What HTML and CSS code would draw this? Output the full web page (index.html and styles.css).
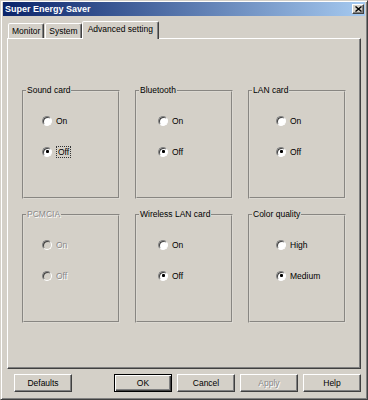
FILE: index.html
```html
<!DOCTYPE html>
<html lang="en">
<head>
    <meta charset="UTF-8">
    <title>Super Energy Saver</title>
    <link rel="stylesheet" href="styles.css">
</head>
<body>
    <div class="window">
        <div class="titlebar">
            <span class="title">Super Energy Saver</span>
            <button class="close" aria-label="Close">
                <svg width="7" height="6" viewBox="0 0 7 6"><path d="M0.5 0.5L6.5 5.5M6.5 0.5L0.5 5.5" stroke="#000" stroke-width="1.4" fill="none"/></svg>
            </button>
        </div>

        <div class="body">
            <div class="tabs">
                <div class="tab">Monitor</div>
                <div class="tab">System</div>
                <div class="tab active">Advanced setting</div>
            </div>

            <div class="panel">
                <div class="groups">
                    <fieldset class="group">
                        <legend>Sound card</legend>
                        <div class="opts">
                            <div class="opt"><span class="rb"></span>On</div>
                            <div class="opt checked"><span class="rb"></span><span class="focus">Off</span></div>
                        </div>
                    </fieldset>
                    <fieldset class="group">
                        <legend>Bluetooth</legend>
                        <div class="opts">
                            <div class="opt"><span class="rb"></span>On</div>
                            <div class="opt checked"><span class="rb"></span>Off</div>
                        </div>
                    </fieldset>
                    <fieldset class="group">
                        <legend>LAN card</legend>
                        <div class="opts">
                            <div class="opt"><span class="rb"></span>On</div>
                            <div class="opt checked"><span class="rb"></span>Off</div>
                        </div>
                    </fieldset>
                    <fieldset class="group disabled">
                        <legend>PCMCIA</legend>
                        <div class="opts">
                            <div class="opt"><span class="rb"></span>On</div>
                            <div class="opt"><span class="rb"></span>Off</div>
                        </div>
                    </fieldset>
                    <fieldset class="group">
                        <legend>Wireless LAN card</legend>
                        <div class="opts">
                            <div class="opt"><span class="rb"></span>On</div>
                            <div class="opt checked"><span class="rb"></span>Off</div>
                        </div>
                    </fieldset>
                    <fieldset class="group">
                        <legend>Color quality</legend>
                        <div class="opts">
                            <div class="opt"><span class="rb"></span>High</div>
                            <div class="opt checked"><span class="rb"></span>Medium</div>
                        </div>
                    </fieldset>
                </div>
            </div>

            <div class="buttons">
                <button class="btn defaults">Defaults</button>
                <button class="btn default">OK</button>
                <button class="btn">Cancel</button>
                <button class="btn" disabled>Apply</button>
                <button class="btn">Help</button>
            </div>
        </div>
    </div>
</body>
</html>
```

FILE: styles.css
```css
* { margin: 0; padding: 0; box-sizing: border-box; }

body {
    width: 368px;
    height: 400px;
    font-family: "Liberation Sans", Arial, sans-serif;
    font-size: 8.5px;
    color: #000;
    background: #d4d0c8;
}

.window {
    width: 368px;
    height: 400px;
    background: #d4d0c8;
    border: 1px solid;
    border-color: #d4d0c8 #404040 #404040 #d4d0c8;
    box-shadow: inset 1px 1px #fff, inset -1px -1px #808080;
    padding: 1px 2px 2px;
}

/* title bar */
.titlebar {
    height: 14px;
    display: flex;
    align-items: center;
    justify-content: space-between;
    padding: 0 1px 0 2px;
    background: linear-gradient(to right, #0a246a, #a6caf0);
}

.title {
    color: #fff;
    font-weight: bold;
    font-size: 9px;
}

.close {
    width: 12px;
    height: 10px;
    display: flex;
    align-items: center;
    justify-content: center;
    background: #d4d0c8;
    border: 1px solid;
    border-color: #fff #404040 #404040 #fff;
    box-shadow: inset -1px -1px #808080;
}

.body {
    padding: 5px 4px 0;
}

/* tabs */
.tabs {
    display: flex;
    align-items: flex-end;
    height: 17px;
    padding-left: 1px;
    position: relative;
    z-index: 1;
}

.tab {
    height: 15px;
    padding: 1px 3px 0;
    line-height: 12px;
    border: 1px solid;
    border-bottom: none;
    border-color: #fff #404040 transparent #fff;
    box-shadow: inset -1px 0 #808080;
    border-radius: 2px 2px 0 0;
    background: #d4d0c8;
}

.tab + .tab { margin-left: 1px; }

.tab.active {
    height: 18px;
    margin-bottom: -1px;
    padding: 1px 5px 0;
    margin-left: 0;
}

/* tab panel */
.panel {
    height: 331px;
    border: 1px solid;
    border-color: #fff #404040 #404040 #fff;
    box-shadow: inset -1px -1px #808080;
    padding: 46px 0 0 14px;
}

.groups {
    display: grid;
    grid-template-columns: repeat(3, 98px);
    column-gap: 15px;
    row-gap: 10px;
}

.group {
    height: 114px;
    min-width: 0;
    border: 2px groove #dcd9d2;
}

.group legend {
    margin-left: 2px;
    padding: 0 1px;
    line-height: 11px;
}

.opts {
    display: flex;
    flex-direction: column;
    gap: 20px;
    padding: 19px 0 0 18px;
}

.group:nth-child(3n+2) .opts { padding-left: 21px; }
.group:nth-child(3n) .opts { padding-left: 26px; }

.opt {
    display: flex;
    align-items: center;
    gap: 4px;
    height: 11px;
}

.rb {
    width: 10px;
    height: 10px;
    display: flex;
    align-items: center;
    justify-content: center;
    border-radius: 50%;
    background: #fff;
    border: 1px solid;
    border-color: #808080 #fff #fff #808080;
    box-shadow: inset 1px 1px #404040;
}

.checked .rb::after {
    content: "";
    width: 3px;
    height: 3px;
    border-radius: 1px;
    background: #000;
}

.focus {
    border: 1px dotted #333;
    padding: 0 1px;
    line-height: 10px;
}

.disabled legend,
.disabled .opt {
    color: #8a8a8a;
    text-shadow: 1px 1px #fff;
}

.disabled .rb { background: #d4d0c8; }

/* bottom buttons */
.buttons {
    display: flex;
    gap: 5px;
    margin-top: 5px;
    padding-left: 7px;
}

.btn {
    width: 58px;
    height: 18px;
    font: inherit;
    color: #000;
    background: #d4d0c8;
    border: 1px solid;
    border-color: #fff #404040 #404040 #fff;
    box-shadow: inset -1px -1px #808080;
}

.btn.defaults { margin-right: auto; }

.btn.default {
    border-color: #000;
    box-shadow: inset 1px 1px #fff, inset -1px -1px #404040, inset -2px -2px #808080;
}

.btn:disabled {
    color: #8a8a8a;
    text-shadow: 1px 1px #fff;
}
```
